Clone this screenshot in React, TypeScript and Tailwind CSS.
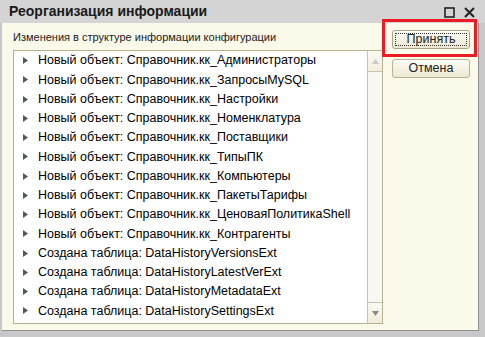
import React from 'react';

const items = [
  'Новый объект: Справочник.кк_Администраторы',
  'Новый объект: Справочник.кк_ЗапросыMySQL',
  'Новый объект: Справочник.кк_Настройки',
  'Новый объект: Справочник.кк_Номенклатура',
  'Новый объект: Справочник.кк_Поставщики',
  'Новый объект: Справочник.кк_ТипыПК',
  'Новый объект: Справочник.кк_Компьютеры',
  'Новый объект: Справочник.кк_ПакетыТарифы',
  'Новый объект: Справочник.кк_ЦеноваяПолитикаShell',
  'Новый объект: Справочник.кк_Контрагенты',
  'Создана таблица: DataHistoryVersionsExt',
  'Создана таблица: DataHistoryLatestVerExt',
  'Создана таблица: DataHistoryMetadataExt',
  'Создана таблица: DataHistorySettingsExt',
  'Новый объект: Подсистема.кк_ИнформацияОбОстатках',
];

function Bullet() {
  return (
    <svg width="5" height="7" viewBox="0 0 5 7" className="shrink-0">
      <path d="M0 0 L5 3.5 L0 7 Z" fill="#4d5a66" />
    </svg>
  );
}

export default function App() {
  return (
    <div className="relative w-[485px] h-[337px] overflow-hidden flex flex-col bg-[#c8c8c8] font-['Liberation_Sans',Arial,sans-serif] text-[12px] text-black">
      {/* title bar */}
      <div className="h-[23px] flex items-center pl-[9px] pr-[10px] bg-[#d4d4d4] shrink-0">
        <span className="font-bold text-[14px] text-[#1a1a1a]">Реорганизация информации</span>
        <div className="ml-auto flex items-center gap-[9px] pt-[2px]">
          <svg width="11" height="11" viewBox="0 0 11 11">
            <rect x="1" y="1" width="9" height="9" fill="none" stroke="#222" strokeWidth="1.6" />
          </svg>
          <svg width="11" height="11" viewBox="0 0 11 11">
            <path d="M1 1 L10 10 M10 1 L1 10" stroke="#222" strokeWidth="2" />
          </svg>
        </div>
      </div>

      {/* body */}
      <div className="flex-1 ml-[2px] mr-[6px] mb-[6px] bg-[#fbf9ea] flex border-r border-b border-[#8f8f8f]">
        <div className="flex flex-col pl-[11px] pt-[7px] w-[381px]">
          <div className="h-[20px] leading-[14px] text-[11px] text-[#1a1a1a]">Изменения в структуре информации конфигурации</div>
          <div className="h-[274px] flex border border-[#b9b291] bg-white">
            <div className="flex-1 overflow-hidden text-[12.5px]">
              {items.map((t) => (
                <div key={t} className="h-[19.25px] flex items-center pl-[9px] gap-[10px] whitespace-nowrap">
                  <Bullet />
                  <span>{t}</span>
                </div>
              ))}
            </div>
            <div className="w-[15px] flex flex-col border-l border-[#c9c3a6] bg-[#f8f7f1]">
              <div className="h-[21px] flex items-center justify-center border-b border-[#c9c3a6] bg-gradient-to-b from-[#fbfaf3] to-[#f1eedc]">
                <svg width="7" height="5" viewBox="0 0 7 5"><path d="M0 5 L3.5 0 L7 5 Z" fill="#c9c9c9" /></svg>
              </div>
              <div className="flex-1" />
              <div className="h-[21px] flex items-center justify-center border-t border-[#c9c3a6] bg-gradient-to-b from-[#fbfaf3] to-[#efecd9]">
                <svg width="7" height="5" viewBox="0 0 7 5"><path d="M0 0 L3.5 5 L7 0 Z" fill="#8a8a8a" /></svg>
              </div>
            </div>
          </div>
        </div>

        <div className="flex flex-col pt-[7px] pl-[9px] gap-[10px] text-[12.5px]">
          <button className="w-[78px] h-[19px] rounded-[3px] border border-[#a8a286] bg-gradient-to-b from-[#fefdf6] to-[#ebe7d1] p-[2px]">
            <div className="h-full border border-dotted border-[#333] flex items-center justify-center text-[#222]">Принять</div>
          </button>
          <button className="w-[78px] h-[19px] rounded-[3px] border border-[#b8b298] bg-gradient-to-b from-[#fefdf6] to-[#ebe7d1] flex items-center justify-center text-[#222]">
            Отмена
          </button>
        </div>
      </div>

      {/* highlight */}
      <div className="absolute left-[382px] top-[19px] w-[95px] h-[38px] border-[3px] border-[#ea1c24]" />
    </div>
  );
}
